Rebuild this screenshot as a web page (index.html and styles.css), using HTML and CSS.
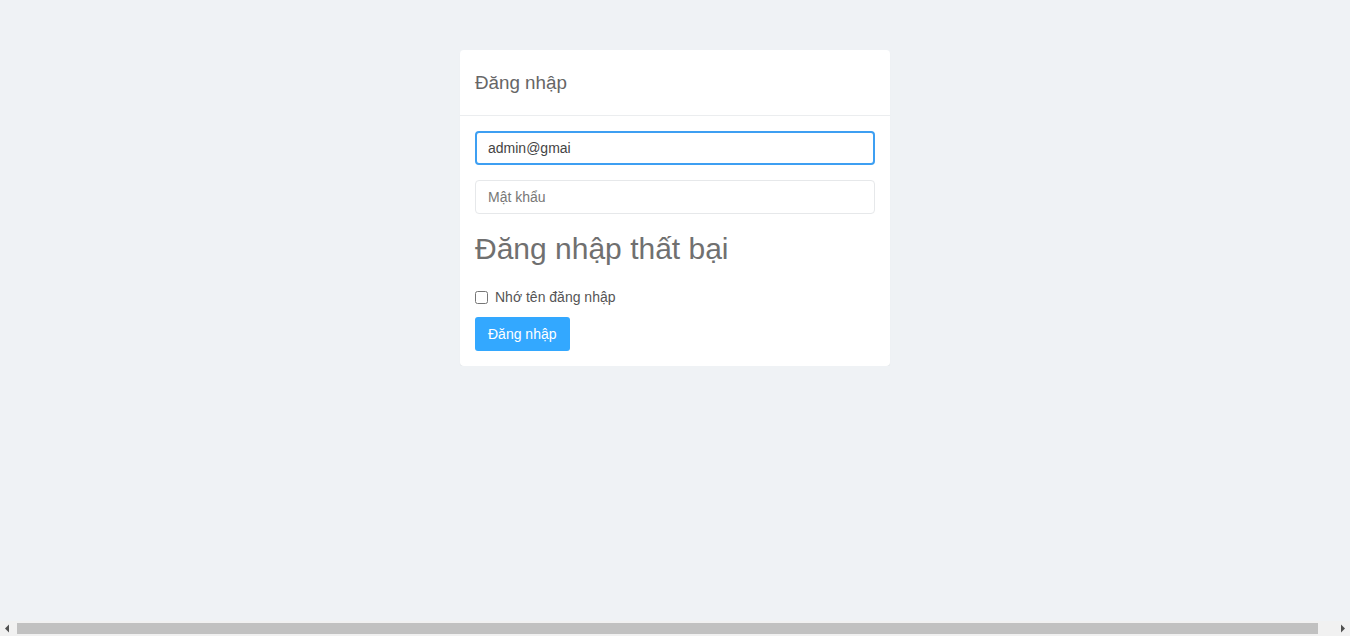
FILE: index.html
```html
<!DOCTYPE html>
<html lang="vi">
<head>
<meta charset="utf-8">
<title>Đăng nhập</title>
<link rel="stylesheet" href="styles.css">
</head>
<body>
<div class="page">
  <div class="card">
    <div class="card-header">Đăng nhập</div>
    <form class="card-body">
      <input class="field field-focus" type="text" value="admin@gmai" autofocus>
      <input class="field" type="password" placeholder="Mật khẩu">
      <h1 class="error">Đăng nhập thất bại</h1>
      <label class="remember"><input type="checkbox" class="check"><span>Nhớ tên đăng nhập</span></label>
      <div class="actions"><button type="button" class="btn">Đăng nhập</button></div>
    </form>
  </div>
</div>
<div class="hscroll" aria-hidden="true">
  <div class="hscroll-btn"><svg width="17" height="15" viewBox="0 0 17 15"><polygon points="5,7.5 9,3.5 9,11.5" fill="#505050"/></svg></div>
  <div class="hscroll-track"><div class="hscroll-thumb"></div></div>
  <div class="hscroll-btn"><svg width="17" height="15" viewBox="0 0 17 15"><polygon points="12,7.5 8,3.5 8,11.5" fill="#505050"/></svg></div>
</div>
</body>
</html>
```

FILE: styles.css
```css
body {
  margin: 0;
  background: #eff2f5;
  font-family: "Liberation Sans", Arial, sans-serif;
  color: #666;
}
.page {
  padding-top: 50px;
  display: flex;
  justify-content: center;
}
.card {
  width: 430px;
  background: #fff;
  border-radius: 4px;
  box-shadow: 0 1px 1px rgba(0, 0, 0, 0.06);
}
.card-header {
  height: 65px;
  display: flex;
  align-items: center;
  padding: 0 15px;
  font-size: 18.8px;
  color: #666;
  border-bottom: 1px solid #ebedef;
}
.card-body {
  padding: 15px;
  display: flex;
  flex-direction: column;
}
.field {
  box-sizing: border-box;
  height: 34px;
  padding: 0 12px;
  border: 1px solid #e6e8ea;
  border-radius: 4px;
  font-family: inherit;
  font-size: 14px;
  color: #555;
  outline: none;
  margin: 0;
}
.field + .field {
  margin-top: 15px;
}
.field::placeholder {
  color: #777;
}
.field-focus {
  border: 2px solid #3d9ff2;
  padding: 0 11px;
  color: #444;
}
.error {
  margin: 18px 0 0;
  font-size: 30px;
  line-height: 33px;
  font-weight: normal;
  color: #707070;
}
.remember {
  margin-top: 22px;
  height: 20px;
  display: flex;
  align-items: center;
  font-size: 14px;
  color: #555;
}
.check {
  width: 13px;
  height: 13px;
  margin: 0 7px 0 0;
}
.actions {
  margin-top: 10px;
  display: flex;
}
.btn {
  height: 34px;
  padding: 0 13px;
  border: none;
  border-radius: 3px;
  background: #33a8ff;
  color: #fff;
  font-family: inherit;
  font-size: 14px;
}
.hscroll {
  position: fixed;
  left: 0;
  right: 0;
  bottom: 0;
  height: 15px;
  display: flex;
  background: #f1f1f1;
}
.hscroll-btn {
  width: 17px;
  height: 15px;
  flex: none;
}
.hscroll-btn svg {
  display: block;
}
.hscroll-track {
  flex: 1;
  padding: 2px 0;
  display: flex;
}
.hscroll-thumb {
  width: 1301px;
  background: #c1c1c1;
}
```
